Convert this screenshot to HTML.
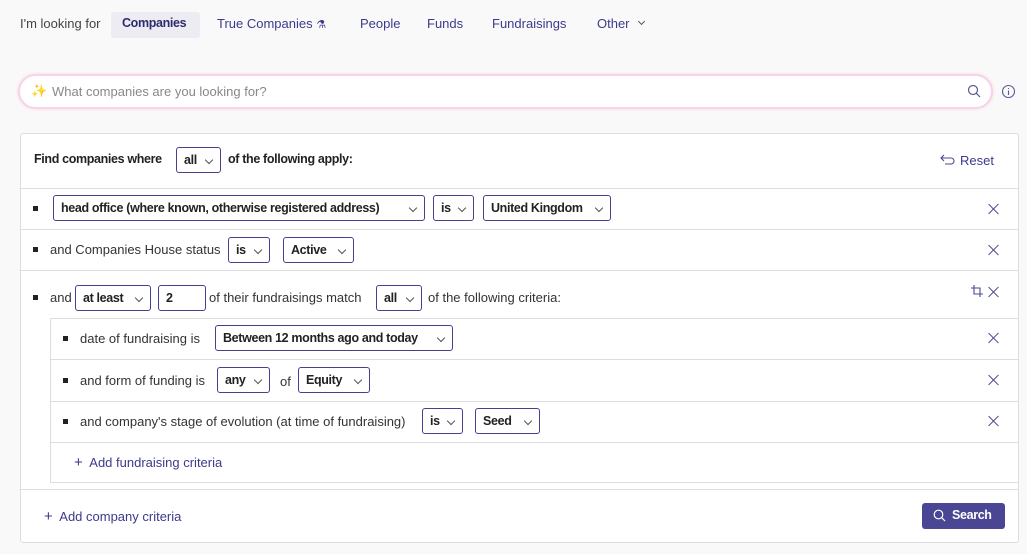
<!DOCTYPE html>
<html><head><meta charset="utf-8"><style>
*{box-sizing:border-box;margin:0;padding:0}
body{width:1027px;height:554px;background:#f9f9fa;font-family:"Liberation Sans",sans-serif;font-size:13px;color:#333;position:relative;overflow:hidden}
.a{position:absolute;white-space:nowrap}
.nav{color:#3d3a8c;top:16px}
.sel{position:absolute;height:26px;border:1px solid #45408f;border-radius:3px;background:#fff;font-weight:bold;color:#222;padding:0 0 0 7px;line-height:24px;letter-spacing:-0.35px;font-size:12.5px}
.sel:after{content:"";position:absolute;right:8px;top:9px;width:5px;height:5px;border-right:1px solid #555;border-bottom:1px solid #555;transform:rotate(45deg)}
.sel.n:after{display:none}
.bd{font-weight:bold;color:#222;letter-spacing:-0.35px;font-size:12.5px}
.b{position:absolute;width:5px;height:5px;background:#222}
.hl{position:absolute;height:1px;background:#ddd}
.x{position:absolute;width:12px;height:12px}
.x:before,.x:after{content:"";position:absolute;left:5px;top:-1px;width:1.3px;height:14px;background:#4a4790;transform:rotate(45deg)}
.x:after{transform:rotate(-45deg)}
.lk{color:#3d3a8c}
</style></head><body>
<div class="a" style="left:20px;top:16px;color:#444">I'm looking for</div>
<div class="a" style="left:111px;top:12px;width:89px;height:26px;background:#ececf2;border-radius:3px"></div>
<div class="a nav bd" style="left:122px;color:#2e2b6e">Companies</div>
<div class="a nav" style="left:217px">True Companies <span style="font-size:11px">⚗</span></div>
<div class="a nav" style="left:360px">People</div>
<div class="a nav" style="left:427px">Funds</div>
<div class="a nav" style="left:492px">Fundraisings</div>
<div class="a nav" style="left:597px">Other</div>
<div class="a" style="left:639px;top:19px;width:5px;height:5px;border-right:1px solid #555;border-bottom:1px solid #555;transform:rotate(45deg)"></div>

<div class="a" style="left:18px;top:74px;width:975px;height:35px;border-radius:18px;background:#fff;border:2px solid #f6d2ec;box-shadow:0 0 3px #fbd6cf"></div>
<div class="a" style="left:31px;top:83px;color:#e8c060;font-size:13px">✨</div>
<div class="a" style="left:52px;top:84px;color:#888">What companies are you looking for?</div>
<svg class="a" style="left:967px;top:84px" width="14" height="14" viewBox="0 0 14 14" fill="none" stroke="#5a5796" stroke-width="1.2"><circle cx="6" cy="6" r="4.5"/><path d="M9.3 9.3L13 13"/></svg>
<svg class="a" style="left:1001px;top:84px" width="15" height="15" viewBox="0 0 15 15" fill="none" stroke="#5a5796" stroke-width="1.1"><circle cx="7.5" cy="7.5" r="6"/><path d="M7.5 6.5v4.5M7.5 4v1"/></svg>

<div class="a" style="left:20px;top:133px;width:999px;height:410px;background:#fff;border:1px solid #ddd;border-radius:3px"></div>
<div class="a bd" style="left:34px;top:152px">Find companies where</div>
<div class="sel" style="left:176px;top:147px;width:45px">all</div>
<div class="a bd" style="left:228px;top:152px">of the following apply:</div>
<svg class="a" style="left:940px;top:154px" width="15" height="12" viewBox="0 0 15 12" fill="none" stroke="#4a4790" stroke-width="1.1"><path d="M4 1L1 4l3 3M1 4h10a3 3 0 0 1 0 6H5"/></svg>
<div class="a lk" style="left:960px;top:153px">Reset</div>

<div class="hl" style="left:21px;top:188px;width:997px"></div>
<div class="b" style="left:33px;top:206px"></div>
<div class="sel" style="left:53px;top:195px;width:372px">head office (where known, otherwise registered address)</div>
<div class="sel" style="left:433px;top:195px;width:41px">is</div>
<div class="sel" style="left:483px;top:195px;width:128px">United Kingdom</div>
<div class="x" style="left:988px;top:203px"></div>

<div class="hl" style="left:21px;top:229px;width:997px"></div>
<div class="b" style="left:33px;top:247px"></div>
<div class="a" style="left:50px;top:242px">and Companies House status</div>
<div class="sel" style="left:228px;top:237px;width:42px">is</div>
<div class="sel" style="left:283px;top:237px;width:71px">Active</div>
<div class="x" style="left:988px;top:244px"></div>

<div class="hl" style="left:21px;top:270px;width:997px"></div>
<div class="b" style="left:33px;top:295px"></div>
<div class="a" style="left:50px;top:290px">and</div>
<div class="sel" style="left:75px;top:285px;width:76px">at least</div>
<div class="sel n" style="left:158px;top:285px;width:48px">2</div>
<div class="a" style="left:209px;top:290px">of their fundraisings match</div>
<div class="sel" style="left:376px;top:285px;width:46px">all</div>
<div class="a" style="left:428px;top:290px">of the following criteria:</div>
<svg class="a" style="left:971px;top:285px" width="12" height="12" viewBox="0 0 12 12" fill="none" stroke="#4a4790" stroke-width="1.1"><path d="M3 0v9h9M0 3h9v9"/></svg>
<div class="x" style="left:988px;top:286px"></div>

<div class="a" style="left:50px;top:318px;width:969px;height:165px;border:1px solid #ddd;border-right:none"></div>
<div class="b" style="left:63px;top:336px"></div>
<div class="a" style="left:80px;top:331px">date of fundraising is</div>
<div class="sel" style="left:215px;top:325px;width:238px">Between 12 months ago and today</div>
<div class="x" style="left:988px;top:332px"></div>
<div class="hl" style="left:51px;top:359px;width:967px"></div>
<div class="b" style="left:63px;top:378px"></div>
<div class="a" style="left:80px;top:373px">and form of funding is</div>
<div class="sel" style="left:217px;top:367px;width:53px">any</div>
<div class="a" style="left:280px;top:374px">of</div>
<div class="sel" style="left:298px;top:367px;width:72px">Equity</div>
<div class="x" style="left:988px;top:374px"></div>
<div class="hl" style="left:51px;top:401px;width:967px"></div>
<div class="b" style="left:63px;top:419px"></div>
<div class="a" style="left:80px;top:414px">and company's stage of evolution (at time of fundraising)</div>
<div class="sel" style="left:422px;top:408px;width:41px">is</div>
<div class="sel" style="left:475px;top:408px;width:65px">Seed</div>
<div class="x" style="left:988px;top:415px"></div>
<div class="hl" style="left:51px;top:442px;width:967px"></div>
<div class="a lk" style="left:74px;top:454px"><span style="font-size:15px;font-weight:300">+</span>&nbsp; Add fundraising criteria</div>

<div class="hl" style="left:21px;top:489px;width:997px"></div>
<div class="a lk" style="left:44px;top:508px"><span style="font-size:15px;font-weight:300">+</span>&nbsp; Add company criteria</div>
<div class="a" style="left:922px;top:503px;width:83px;height:26px;background:#4b4694;border-radius:3px"></div>
<svg class="a" style="left:933px;top:509px" width="13" height="13" viewBox="0 0 13 13" fill="none" stroke="#fff" stroke-width="1.2"><circle cx="5.5" cy="5.5" r="4.3"/><path d="M8.7 8.7L12 12"/></svg>
<div class="a bd" style="left:952px;top:508px;color:#fff">Search</div>
</body></html>
